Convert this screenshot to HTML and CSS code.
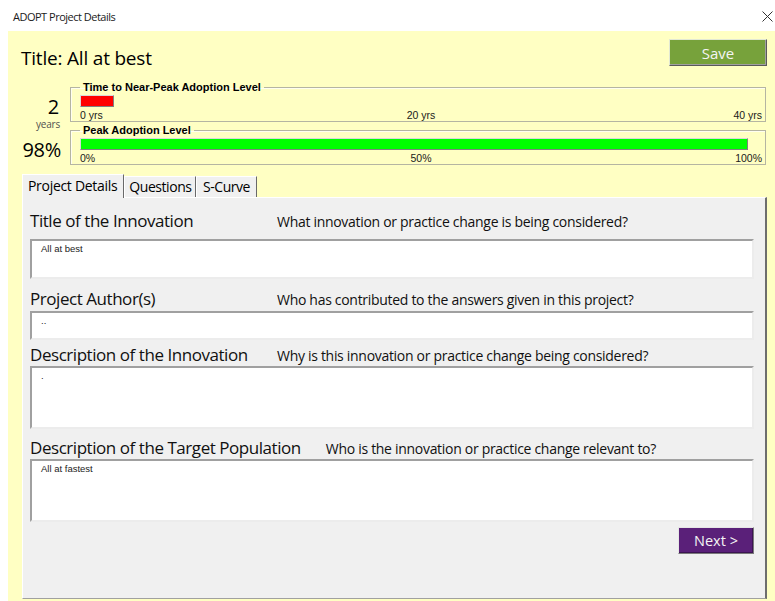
FILE: index.html
```html
<!DOCTYPE html>
<html lang="en">
<head>
<meta charset="utf-8">
<title>ADOPT Project Details</title>
<link rel="stylesheet" href="styles.css">
</head>
<body>
<div class="window">
  <header class="titlebar">
    <span class="titlebar-text">ADOPT Project Details</span>
    <button class="close" aria-label="Close">
      <svg width="11" height="11" viewBox="0 0 11 11"><path d="M0.5 0.5L10.5 10.5M10.5 0.5L0.5 10.5" stroke="#333" stroke-width="1" fill="none"/></svg>
    </button>
  </header>

  <main class="form">
    <div class="head-row">
      <h1 class="project-title">Title: All at best</h1>
      <button class="btn btn-save">Save</button>
    </div>

    <div class="metric">
      <div class="metric-value metric-value--years">
        <span class="metric-number">2</span>
        <span class="metric-unit">years</span>
      </div>
      <fieldset class="frame">
        <legend>Time to Near-Peak Adoption Level</legend>
        <div class="track"><div class="bar bar--red" style="width:5%"></div></div>
        <div class="scale"><span>0 yrs</span><span>20 yrs</span><span>40 yrs</span></div>
      </fieldset>
    </div>

    <div class="metric">
      <div class="metric-value metric-value--pct">
        <span class="metric-number">98%</span>
      </div>
      <fieldset class="frame">
        <legend>Peak Adoption Level</legend>
        <div class="track"><div class="bar bar--green" style="width:98%"></div></div>
        <div class="scale"><span>0%</span><span>50%</span><span>100%</span></div>
      </fieldset>
    </div>

    <nav class="tabs">
      <span class="tab tab--active">Project Details</span>
      <span class="tab">Questions</span>
      <span class="tab">S-Curve</span>
    </nav>

    <section class="panel">
      <div class="field field--title">
        <div class="field-head">
          <h2 class="field-label">Title of the Innovation</h2>
          <p class="field-question">What innovation or practice change is being considered?</p>
        </div>
        <div class="textbox textbox--short">All at best</div>
      </div>

      <div class="field field--author">
        <div class="field-head">
          <h2 class="field-label">Project Author(s)</h2>
          <p class="field-question">Who has contributed to the answers given in this project?</p>
        </div>
        <div class="textbox textbox--line">..</div>
      </div>

      <div class="field field--desc">
        <div class="field-head">
          <h2 class="field-label">Description of the Innovation</h2>
          <p class="field-question">Why is this innovation or practice change being considered?</p>
        </div>
        <div class="textbox textbox--tall">.</div>
      </div>

      <div class="field field--target">
        <div class="field-head">
          <h2 class="field-label">Description of the Target Population</h2>
          <p class="field-question">Who is the innovation or practice change relevant to?</p>
        </div>
        <div class="textbox textbox--tall">All at fastest</div>
      </div>

      <div class="actions">
        <button class="btn btn-next">Next &gt;</button>
      </div>
    </section>
  </main>
</div>
</body>
</html>
```

FILE: styles.css
```css
* { box-sizing: border-box; }

html, body {
  margin: 0;
  padding: 0;
  background: #ffffff;
}

body {
  font-family: "Open Sans", "Noto Sans", sans-serif;
  color: #000;
}

.window {
  width: 775px;
  height: 601px;
  display: flex;
  flex-direction: column;
  overflow: hidden;
  background: #ffffff;
}

/* ---- title bar ---- */
.titlebar {
  height: 31px;
  flex: none;
  display: flex;
  align-items: center;
  justify-content: space-between;
  padding: 0 1px 0 13px;
}

.titlebar-text {
  font-size: 11px;
  color: #1a1a1a;
  letter-spacing: -0.5px;
  margin-top: 2px;
}

.close {
  border: 0;
  background: none;
  padding: 0;
  width: 12px;
  height: 12px;
  margin-top: 3px;
  display: flex;
}

/* ---- form body ---- */
.form {
  flex: 1;
  margin-left: 8px;
  background: #ffffc3;
  display: flex;
  flex-direction: column;
  padding: 0 8px 2px 0;
}

.head-row {
  height: 50px;
  flex: none;
  display: flex;
  justify-content: space-between;
  align-items: flex-start;
  padding: 8px 0 0 13px;
}

.project-title {
  margin: 7px 0 0;
  font-size: 19px;
  font-weight: 400;
  line-height: 24px;
  letter-spacing: -0.2px;
}

.btn {
  font-family: "Open Sans", "Noto Sans", sans-serif;
  color: #f4f4f4;
  border: 1px solid;
  cursor: pointer;
  padding: 0;
}

.btn-save {
  width: 98px;
  height: 27px;
  background: #77a23b;
  font-size: 15px;
  border-color: #e2e8d4 #5a5a5a #5a5a5a #e2e8d4;
  box-shadow: inset -1px -1px 0 #a0a0a0;
}

/* ---- metric frames ---- */
.metric {
  display: flex;
  align-items: flex-start;
  flex: none;
  margin-bottom: 2px;
}

.metric-value {
  width: 62px;
  height: 40px;
  flex: none;
  display: flex;
  flex-direction: column;
  align-items: flex-end;
  padding-right: 11px;
}

.metric-value--years { padding-top: 16px; }
.metric-value--pct { padding-top: 16px; padding-right: 9px; }

.metric-number {
  font-size: 20px;
  line-height: 19px;
  letter-spacing: -0.3px;
}

.metric-unit {
  font-size: 10px;
  line-height: 12px;
  margin-top: 2px;
  color: #505050;
  margin-right: -1px;
  letter-spacing: -0.2px;
}

.frame {
  flex: 1;
  margin: 0 1px 0 0;
  padding: 0 3px 0 9px;
  border: 1px solid #b5b5a2;
  box-shadow: inset 1px 1px 0 #fffff0;
  min-width: 0;
}

.frame legend {
  font-family: "Liberation Sans", Arial, sans-serif;
  font-size: 11px;
  font-weight: 700;
  line-height: 12px;
  margin-left: 0;
  padding: 0 3px;
  color: #000;
}

.track {
  margin-top: 2px;
  height: 12px;
}

.bar {
  height: 12px;
  border: 1px solid;
  border-color: #d8d8d8 #808080 #808080 #d8d8d8;
}

.bar--red { background: #ff0000; }
.bar--green { background: #00ff00; }

.scale {
  display: grid;
  grid-template-columns: 1fr auto 1fr;
  margin-top: 2px;
  font-family: "Liberation Sans", Arial, sans-serif;
  font-size: 10.5px;
  line-height: 12px;
  color: #1a1a1a;
}

.scale span:last-child { text-align: right; }

/* ---- tab strip ---- */
.tabs {
  display: flex;
  align-items: flex-end;
  margin: 7px 0 0 14px;
  height: 23px;
  flex: none;
  position: relative;
  z-index: 1;
}

.tab {
  font-size: 14px;
  line-height: 20px;
  height: 21px;
  min-width: 61px;
  padding: 0 3px 0 4px;
  text-align: center;
  background: #f0f0f0;
  border-top: 1px solid #ffffff;
  border-left: 1px solid #ffffff;
  border-right: 1px solid #696969;
  letter-spacing: -0.45px;
  white-space: nowrap;
}

.tab--active {
  height: 24px;
  line-height: 22px;
  padding: 0 6px 0 5px;
  margin-bottom: -1px;
  letter-spacing: -0.3px;
}

/* ---- tab page ---- */
.panel {
  flex: 1;
  margin-left: 14px;
  background: #f0f0f0;
  border-top: 1px solid #ffffff;
  border-left: 1px solid #ffffff;
  border-right: 2px solid #6d6d6d;
  border-bottom: 1px solid #a0a0a0;
  padding: 0 11px 0 7px;
}

.field-head {
  display: flex;
  align-items: baseline;
  gap: 25px;
}

.field-label {
  margin: 0;
  min-width: 222px;
  font-size: 17px;
  font-weight: 400;
  line-height: 22px;
  letter-spacing: -0.45px;
  color: #111;
}

.field-question {
  margin: 0;
  font-size: 14px;
  letter-spacing: -0.3px;
  color: #111;
}

.field--title { padding-top: 12px; }
.field--title .field-head { margin-bottom: 7px; }
.field--author { padding-top: 9px; }
.field--author .field-head { margin-bottom: 1px; }
.field--desc { padding-top: 4px; }
.field--desc .field-head { margin-bottom: 0; }
.field--target { padding-top: 8px; }
.field--target .field-head { margin-bottom: 0; }

.textbox {
  background: #ffffff;
  border: 2px solid;
  border-color: #a0a0a0 #ececec #ececec #a0a0a0;
  font-family: "Liberation Sans", Arial, sans-serif;
  font-size: 9.5px;
  line-height: 11px;
  padding: 2px 9px;
  color: #222;
}

.textbox--short { height: 40px; }
.textbox--line { height: 29px; }
.textbox--tall { height: 63px; }

.actions {
  display: flex;
  justify-content: flex-end;
  margin-top: 5px;
}

.btn-next {
  width: 76px;
  height: 27px;
  background: #5a2079;
  font-size: 14.5px;
  border-color: #e6e6e6 #7a7a7a #7a7a7a #e6e6e6;
  box-shadow: inset -1px -1px 0 #3c1552;
}
```
